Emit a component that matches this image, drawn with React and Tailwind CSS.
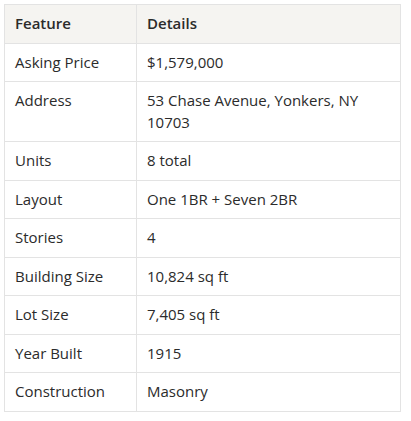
export default function App() {
  const rows = [
    ["Asking Price", "$1,579,000"],
    ["Address", "53 Chase Avenue, Yonkers, NY 10703"],
    ["Units", "8 total"],
    ["Layout", "One 1BR + Seven 2BR"],
    ["Stories", "4"],
    ["Building Size", "10,824 sq ft"],
    ["Lot Size", "7,405 sq ft"],
    ["Year Built", "1915"],
    ["Construction", "Masonry"],
  ];
  return (
    <div className="bg-white w-[411px] h-[421px] pt-[4px] pl-[4px]" style={{ fontFamily: '"Open Sans", sans-serif' }}>
      <table className="w-[397px] border-collapse text-[15px] leading-[21.5px] text-[#2b2b2b]">
        <thead>
          <tr className="bg-[#f5f4f1]">
            <th className="w-[132px] border border-[#e3e3e3] px-[10px] py-[8px] text-left font-semibold">Feature</th>
            <th className="border border-[#e3e3e3] px-[10px] py-[8px] text-left font-semibold">Details</th>
          </tr>
        </thead>
        <tbody>
          {rows.map(([a, b]) => (
            <tr key={a}>
              <td className="border border-[#e3e3e3] px-[10px] py-[8px] align-top">{a}</td>
              <td className="border border-[#e3e3e3] px-[10px] py-[8px] align-top">{b}</td>
            </tr>
          ))}
        </tbody>
      </table>
    </div>
  );
}
